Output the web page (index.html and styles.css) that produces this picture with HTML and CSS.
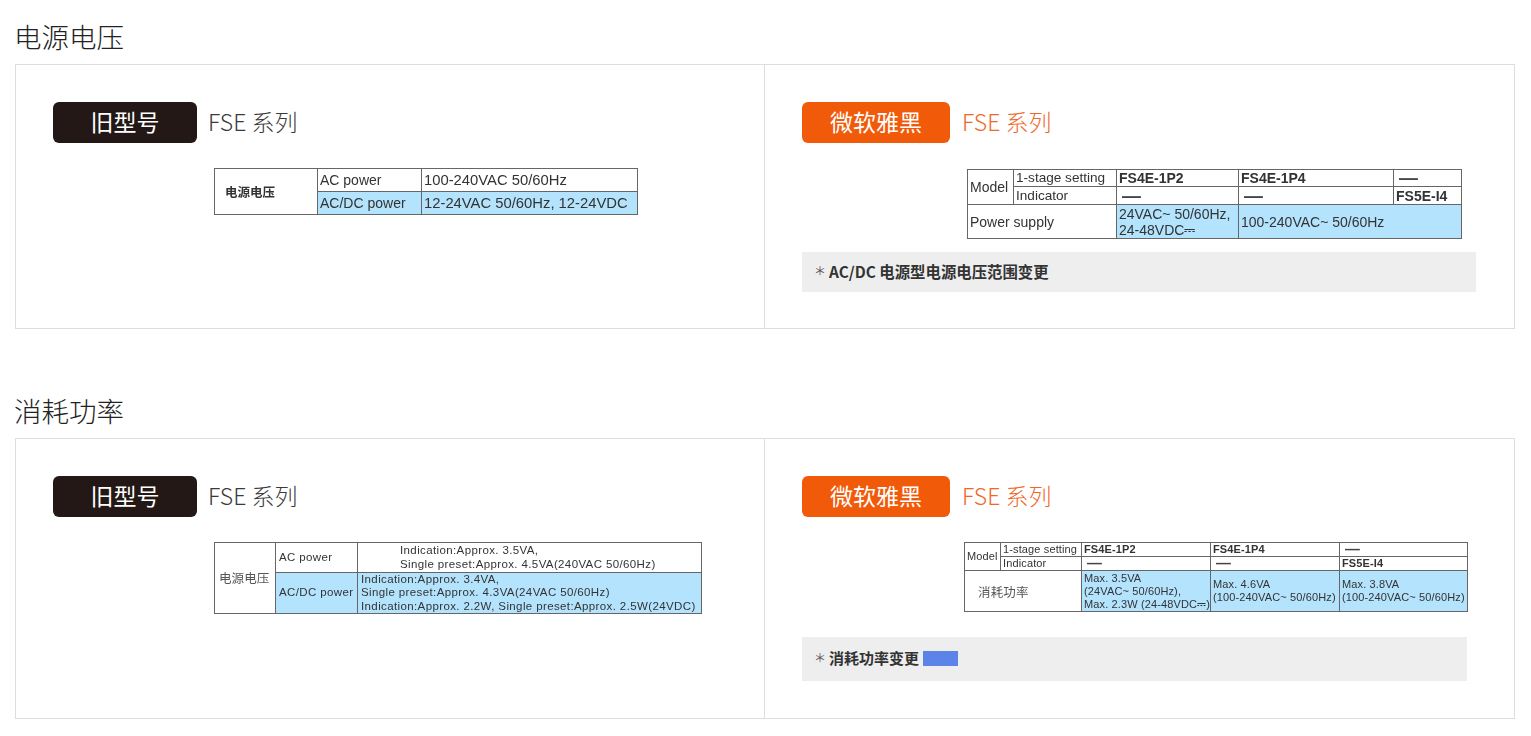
FILE: index.html
```html
<!DOCTYPE html>
<html lang="zh-CN">
<head>
<meta charset="utf-8">
<title>FSE 系列</title>
<link rel="stylesheet" href="styles.css">
</head>
<body>
<main class="page">
  <section class="section section-voltage">
    <h2 class="section-title">电源电压</h2>
    <div class="panel">
      <div class="cell cell-old">
        <div class="head">
          <span class="badge badge-old">旧型号</span>
          <span class="series series-old">FSE 系列</span>
        </div>
        <table class="spec spec-a">
          <colgroup><col class="a1"><col class="a2"><col class="a3"></colgroup>
          <tr class="ra"><td rowspan="2" class="first-bold">电源电压</td><td>AC power</td><td class="wide">100-240VAC 50/60Hz</td></tr>
          <tr class="ra"><td class="hl">AC/DC power</td><td class="hl wide">12-24VAC 50/60Hz, 12-24VDC</td></tr>
        </table>
      </div>
      <div class="cell">
        <div class="head">
          <span class="badge badge-new">微软雅黑</span>
          <span class="series series-new">FSE 系列</span>
        </div>
        <table class="spec spec-b">
          <colgroup><col class="b1"><col class="b2"><col class="b3"><col class="b4"><col class="b5"></colgroup>
          <tr class="rb1"><td rowspan="2">Model</td><td class="tight">1-stage setting</td><th>FS4E-1P2</th><th>FS4E-1P4</th><td class="dash"><span class="dash-mark">—</span></td></tr>
          <tr class="rb2"><td class="tight">Indicator</td><td class="dash"><span class="dash-mark">—</span></td><td class="dash"><span class="dash-mark">—</span></td><th>FS5E-I4</th></tr>
          <tr class="rb3"><td colspan="2">Power supply</td><td class="hl">24VAC~ 50/60Hz,<br>24-48VDC⎓</td><td class="hl" colspan="2">100-240VAC~ 50/60Hz</td></tr>
        </table>
        <p class="note note-a"><span class="star">＊</span> AC/DC 电源型电源电压范围变更</p>
      </div>
    </div>
  </section>

  <section class="section section-power">
    <h2 class="section-title">消耗功率</h2>
    <div class="panel">
      <div class="cell cell-old">
        <div class="head">
          <span class="badge badge-old">旧型号</span>
          <span class="series series-old">FSE 系列</span>
        </div>
        <table class="spec spec-c">
          <colgroup><col class="c1"><col class="c2"><col class="c3"></colgroup>
          <tr class="rc1"><td rowspan="2" class="first-plain">电源电压</td><td>AC power</td><td class="indent">Indication:Approx. 3.5VA,<br>Single preset:Approx. 4.5VA(240VAC 50/60Hz)</td></tr>
          <tr class="rc2"><td class="hl">AC/DC power</td><td class="hl">Indication:Approx. 3.4VA,<br>Single preset:Approx. 4.3VA(24VAC 50/60Hz)<br>Indication:Approx. 2.2W, Single preset:Approx. 2.5W(24VDC)</td></tr>
        </table>
      </div>
      <div class="cell">
        <div class="head">
          <span class="badge badge-new">微软雅黑</span>
          <span class="series series-new">FSE 系列</span>
        </div>
        <table class="spec spec-d">
          <colgroup><col class="d1"><col class="d2"><col class="d3"><col class="d4"><col class="d5"></colgroup>
          <tr class="rd1"><td rowspan="2">Model</td><td>1-stage setting</td><th>FS4E-1P2</th><th>FS4E-1P4</th><td class="dash"><span class="dash-mark">—</span></td></tr>
          <tr class="rd1"><td>Indicator</td><td class="dash"><span class="dash-mark">—</span></td><td class="dash"><span class="dash-mark">—</span></td><th>FS5E-I4</th></tr>
          <tr class="rd3"><td colspan="2" class="power-label">消耗功率</td><td class="hl">Max. 3.5VA<br>(24VAC~ 50/60Hz),<br>Max. 2.3W (24-48VDC⎓)</td><td class="hl">Max. 4.6VA<br>(100-240VAC~ 50/60Hz)</td><td class="hl">Max. 3.8VA<br>(100-240VAC~ 50/60Hz)</td></tr>
        </table>
        <p class="note note-b"><span class="star">＊</span> 消耗功率变更 <span class="swatch"></span></p>
      </div>
    </div>
  </section>
</main>
</body>
</html>
```

FILE: styles.css
```css
* { box-sizing: border-box; }
html, body { margin: 0; padding: 0; background: #fff; }
body {
  font-family: "Noto Sans CJK SC", "Noto Sans", sans-serif;
  color: #333;
}
.page { padding: 14px 16px 0 15px; }
.section-power { margin-top: 59px; }
.section-title {
  margin: 0 0 6px;
  font-size: 27.5px;
  line-height: 44px;
  font-weight: 300;
  color: #222;
  text-indent: -1px;
}
.panel {
  display: grid;
  grid-template-columns: 749px 1fr;
  border: 1px solid #ddd;
}
.cell {
  padding: 37px 0 36px 37px;
}
.section-power .cell { padding-bottom: 37px; }
.cell-old { border-right: 1px solid #ddd; }
.head {
  display: flex;
  align-items: center;
  gap: 11px;
  height: 41px;
}
.badge {
  display: flex;
  align-items: center;
  justify-content: center;
  height: 41px;
  padding-bottom: 3px;
  border-radius: 6px;
  color: #fff;
  font-size: 23px;
  font-weight: 400;
}
.badge-old { width: 144px; background: #231815; }
.badge-new { width: 148px; background: #f15a09; }
.series {
  font-size: 23px;
  font-weight: 300;
  line-height: 41px;
  padding-bottom: 3px;
}
.series-old { color: #3a3a3a; }
.series-new { color: #f0672a; margin-left: 1px; }
.spec {
  table-layout: fixed;
  border-collapse: collapse;
  font-family: "Liberation Sans", Arial, sans-serif;
  color: #333;
  border: 1.5px solid #555;
  filter: blur(0.3px);
}
.spec td, .spec th {
  border: 1px solid #666;
  padding: 0 2px;
  font-weight: 400;
  text-align: left;
  vertical-align: middle;
  white-space: nowrap;
}
.spec th { font-weight: 700; }
.spec .hl { background: #b3e3fd; }
.spec .dash { padding-left: 5px; }
.dash-mark {
  font-size: 1.35em;
  line-height: 0;
  font-weight: 700;
  color: #444;
  vertical-align: -1px;
}

/* table: old voltage */
.spec-a { margin: 25px 0 0 161px; width: 423px; font-size: 14px; }
.a1 { width: 103px; } .a2 { width: 104px; } .a3 { width: 216px; }
.ra { height: 23px; }
.spec .wide { font-size: 14.8px; }
.spec .first-bold {
  font-family: "Noto Sans CJK SC", sans-serif;
  font-size: 12.5px;
  font-weight: 700;
  padding-left: 10px;
}

/* table: new voltage */
.spec-b { margin: 26px 0 0 165px; width: 494px; font-size: 14px; line-height: 16px; }
.b1 { width: 46px; } .b2 { width: 103px; } .b3 { width: 122px; } .b4 { width: 155px; } .b5 { width: 68px; }
.rb1 { height: 17px; } .rb2 { height: 18px; } .rb3 { height: 34px; }
.spec .tight { font-size: 13.6px; }

/* table: old power */
.spec-c { margin: 25px 0 0 161px; width: 487px; font-size: 11.5px; line-height: 13.3px; letter-spacing: 0.38px; }
.c1 { width: 61px; } .c2 { width: 82px; } .c3 { width: 344px; }
.rc1 { height: 30px; } .rc2 { height: 41px; }
.spec-c td { padding-left: 3px; }
.spec-c .indent { padding-left: 42px; }
.spec .first-plain {
  font-family: "Noto Sans CJK SC", sans-serif;
  font-size: 12.5px;
  letter-spacing: 0.1px;
  color: #555;
  padding-left: 4px;
}

/* table: new power */
.spec-d { margin: 25px 0 0 162px; width: 503px; font-size: 11px; line-height: 13px; letter-spacing: 0.13px; }
.d1 { width: 36px; } .d2 { width: 81px; } .d3 { width: 129px; } .d4 { width: 129px; } .d5 { width: 128px; }
.rd1 { height: 14px; } .rd3 { height: 41px; }
.spec .power-label {
  font-family: "Noto Sans CJK SC", sans-serif;
  font-size: 12.5px;
  color: #555;
  padding-left: 13px;
}

/* grey notes */
.note {
  display: flex;
  align-items: center;
  gap: 3px;
  margin: 13px 0 0;
  padding: 0 0 3px 12px;
  background: #eee;
  font-size: 15px;
  font-weight: 700;
  color: #333;
}
.note-a { width: 674px; height: 40px; font-size: 15.4px; }
.note-b { width: 665px; height: 44px; margin-top: 25px; }
.star { font-weight: 400; color: #555; font-size: 12px; }
.swatch { width: 35px; height: 15px; background: #5b83e8; margin: 2px 0 0 1px; }
```
